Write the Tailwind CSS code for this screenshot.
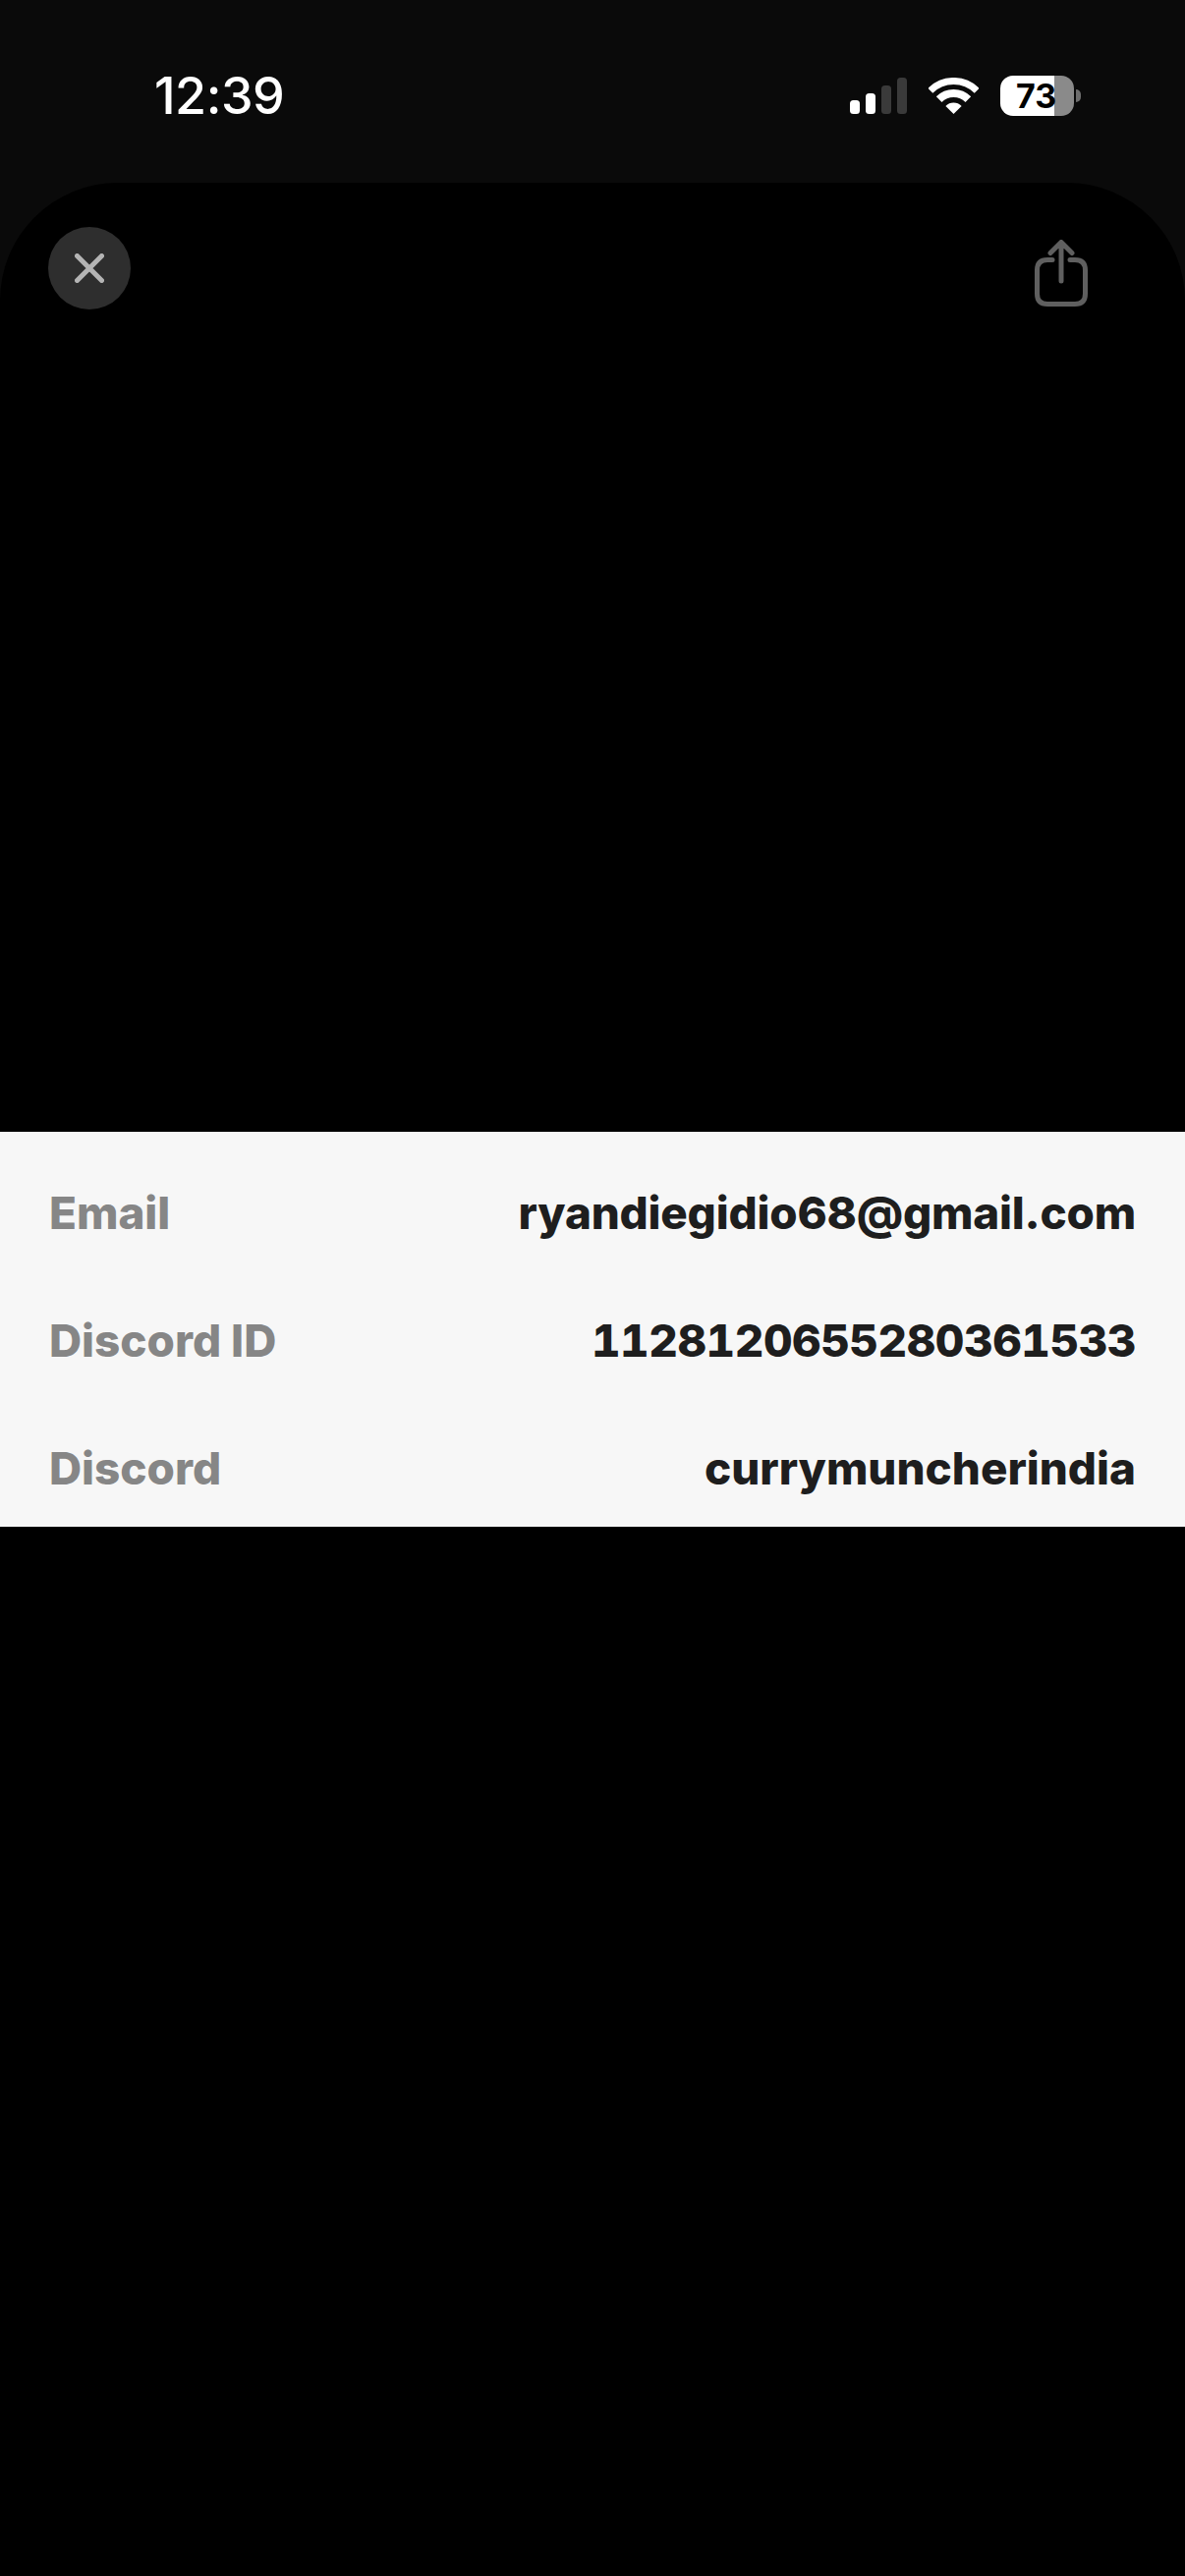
<!DOCTYPE html>
<html lang="en">
  <head>
    <meta charset="UTF-8" />
    <meta name="viewport" content="width=device-width, initial-scale=1.0" />
    <title>Account Details</title>
    <script src="https://cdn.jsdelivr.net/npm/@tailwindcss/browser@4"></script>
  </head>
  <body class="bg-[#0a0a0a] font-['Inter',sans-serif]">
    <div class="w-[1206px] h-[2622px] flex flex-col overflow-hidden">
      <!-- Status bar -->
      <header class="h-[186px] shrink-0 flex items-start justify-between pl-[157px] pr-[106px] pt-[77px] text-white">
        <span class="text-[52px] leading-[42px] font-medium tracking-[-0.5px]">12:39</span>
        <div class="flex items-start">
          <svg class="mt-[2px] ml-0" width="58" height="37" viewBox="0 0 58 37" aria-hidden="true">
            <rect x="0" y="23" width="10" height="14" rx="3.5" fill="#fff" />
            <rect x="16" y="16" width="10" height="21" rx="3.5" fill="#fff" />
            <rect x="32" y="8" width="10" height="29" rx="3.5" fill="#3a3a3a" />
            <rect x="48" y="0" width="10" height="37" rx="3.5" fill="#3a3a3a" />
          </svg>
          <svg class="mt-[2px] ml-[22px]" width="51" height="37" viewBox="0 0 51 37" fill="none" aria-hidden="true">
            <path d="M1.8 13.3A33.5 33.5 0 0 1 49.2 13.3" stroke="#fff" stroke-width="7" />
            <path d="M10.65 22.15A21 21 0 0 1 40.35 22.15" stroke="#fff" stroke-width="8" />
            <path d="M25.5 37L17.4 28.9A11.5 11.5 0 0 1 33.6 28.9Z" fill="#fff" />
          </svg>
          <div class="relative ml-[22px] w-[75px] h-[41px] rounded-[13px] overflow-hidden flex">
            <div class="w-[55px] bg-white"></div>
            <div class="w-[20px] bg-[#8a8a8a]"></div>
            <span class="absolute left-[16px] top-0 text-[34px] leading-[41px] font-bold text-black">73</span>
          </div>
          <div class="ml-[2px] mt-[14px] w-[5px] h-[13px] rounded-r-full bg-[#6e6e6e]"></div>
        </div>
      </header>

      <!-- Sheet -->
      <main class="flex-1 bg-black rounded-t-[120px] flex flex-col">
        <div class="h-[966px] shrink-0 flex items-start justify-between pl-[49px] pr-[99px] pt-[45px]">
          <button class="w-[84px] h-[84px] rounded-full bg-[#2e2e2e] flex items-center justify-center" aria-label="Close">
            <svg width="30" height="30" viewBox="0 0 30 30" fill="none" stroke="#b4b4b4" stroke-width="5" stroke-linecap="round" aria-hidden="true">
              <path d="M2.5 2.5L27.5 27.5M27.5 2.5L2.5 27.5" />
            </svg>
          </button>
          <button class="mt-[13px]" aria-label="Share">
            <svg width="54" height="68" viewBox="0 0 54 68" fill="none" stroke="#5f5f5f" stroke-width="5" stroke-linecap="round" stroke-linejoin="round" aria-hidden="true">
              <path d="M18 20.5H13Q2.5 20.5 2.5 31V55Q2.5 65.5 13 65.5H41Q51.5 65.5 51.5 55V31Q51.5 20.5 41 20.5H36" />
              <path d="M27 42V3M16 13.5L27 2.5L38 13.5" />
            </svg>
          </button>
        </div>

        <!-- Details -->
        <section class="h-[402px] shrink-0 overflow-hidden bg-[#f7f7f7] pt-[18px] pl-[50px] pr-[50px] text-[45.8px] font-extrabold">
          <div class="h-[130px] flex items-center justify-between">
            <span class="text-[#868686]">Email</span>
            <span class="text-[#1e1e1e] tracking-[-0.2px]">ryandiegidio68@gmail.com</span>
          </div>
          <div class="h-[130px] flex items-center justify-between">
            <span class="text-[#868686]">Discord ID</span>
            <span class="text-[#1e1e1e] tabular-nums tracking-[-0.4px]">1128120655280361533</span>
          </div>
          <div class="h-[130px] flex items-center justify-between">
            <span class="text-[#868686]">Discord</span>
            <span class="text-[#1e1e1e]">currymuncherindia</span>
          </div>
        </section>
      </main>
    </div>
  </body>
</html>
